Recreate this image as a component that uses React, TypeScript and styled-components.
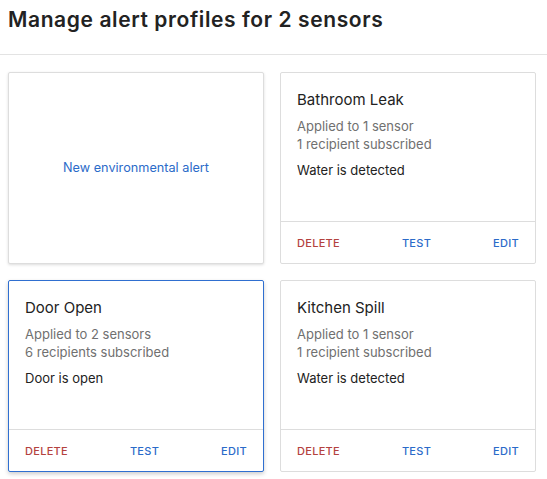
import React from "react";
import styled, { createGlobalStyle, css } from "styled-components";

const Global = createGlobalStyle`
  html, body { margin: 0; padding: 0; background: #ffffff; }
  body { font-family: Inter, Roboto, "Liberation Sans", Arial, sans-serif; color: #222222; -webkit-font-smoothing: antialiased; }
  * { box-sizing: border-box; }
`;

const Page = styled.div`
  width: 547px;
  min-height: 479px;
  background: #ffffff;
`;

const Header = styled.header`
  border-bottom: 1px solid #e3e3e3;
  padding: 6px 8px 20px;
`;

const Heading = styled.h1`
  margin: 0;
  font-size: 21px;
  line-height: 28px;
  font-weight: 600;
  letter-spacing: 0.6px;
  color: #222222;
`;

const Grid = styled.div`
  display: grid;
  grid-template-columns: 256px 256px;
  grid-auto-rows: 192px;
  gap: 16px;
  padding: 17px 8px 8px;
`;

const Card = styled.div<{ $selected?: boolean; $raised?: boolean }>`
  display: flex;
  flex-direction: column;
  border: 1px solid #dddddd;
  border-radius: 2px;
  background: #ffffff;
  ${(p) =>
    p.$raised &&
    css`
      box-shadow: 0 1px 3px rgba(0, 0, 0, 0.14);
    `}
  ${(p) =>
    p.$selected &&
    css`
      border-color: #2f6fd0;
      box-shadow: 0 2px 4px rgba(0, 0, 0, 0.2);
    `}
`;

const NewCard = styled(Card)`
  align-items: center;
  justify-content: center;
  cursor: pointer;
`;

const NewLabel = styled.span`
  font-size: 12.7px;
  line-height: 18px;
  color: #2b6bc9;
`;

const Body = styled.div`
  flex: 1;
  padding: 17px 16px 16px;
`;

const Title = styled.div`
  font-size: 15px;
  line-height: 20px;
  color: #222222;
  margin-bottom: 7px;
`;

const Meta = styled.div`
  font-size: 13px;
  line-height: 18px;
  color: #707070;
`;

const Condition = styled.div`
  margin-top: 8px;
  font-size: 13px;
  line-height: 18px;
  color: #222222;
`;

const Footer = styled.div`
  height: 42px;
  border-top: 1px solid #dddddd;
  display: flex;
  align-items: center;
  justify-content: space-between;
  padding: 0 16px;
`;

const Action = styled.button<{ $danger?: boolean }>`
  border: none;
  background: none;
  padding: 0;
  font-family: inherit;
  font-size: 11px;
  font-weight: 500;
  letter-spacing: 0.3px;
  text-transform: uppercase;
  color: ${(p) => (p.$danger ? "#b4423e" : "#2b6bc9")};
  cursor: pointer;
`;

type Profile = {
  name: string;
  sensors: string;
  recipients: string;
  condition: string;
  selected?: boolean;
};

const profiles: Profile[] = [
  {
    name: "Bathroom Leak",
    sensors: "Applied to 1 sensor",
    recipients: "1 recipient subscribed",
    condition: "Water is detected",
  },
  {
    name: "Door Open",
    sensors: "Applied to 2 sensors",
    recipients: "6 recipients subscribed",
    condition: "Door is open",
    selected: true,
  },
  {
    name: "Kitchen Spill",
    sensors: "Applied to 1 sensor",
    recipients: "1 recipient subscribed",
    condition: "Water is detected",
  },
];

export default function App() {
  return (
    <Page>
      <Global />
      <Header>
        <Heading>Manage alert profiles for 2 sensors</Heading>
      </Header>
      <Grid>
        <NewCard $raised>
          <NewLabel>New environmental alert</NewLabel>
        </NewCard>
        {profiles.map((p) => (
          <Card key={p.name} $selected={p.selected}>
            <Body>
              <Title>{p.name}</Title>
              <Meta>{p.sensors}</Meta>
              <Meta>{p.recipients}</Meta>
              <Condition>{p.condition}</Condition>
            </Body>
            <Footer>
              <Action $danger>Delete</Action>
              <Action>Test</Action>
              <Action>Edit</Action>
            </Footer>
          </Card>
        ))}
      </Grid>
    </Page>
  );
}
